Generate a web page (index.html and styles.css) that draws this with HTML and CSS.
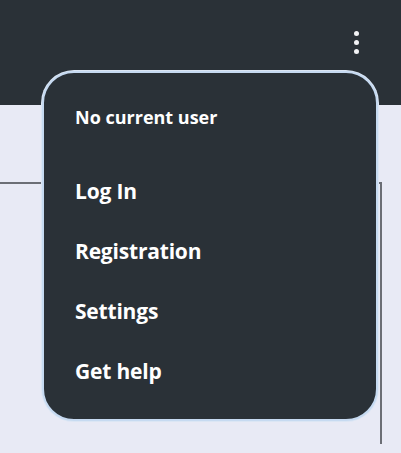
FILE: index.html
```html
<!DOCTYPE html>
<html>
<head>
<meta charset="utf-8">
<link rel="stylesheet" href="styles.css">
</head>
<body>
<header class="topbar">
  <button class="kebab" aria-label="More">
    <span class="dot"></span><span class="dot"></span><span class="dot"></span>
  </button>
</header>
<main class="content">
  <section class="panel"></section>
</main>
<nav class="menu">
  <div class="menu-status">No current user</div>
  <ul class="menu-list">
    <li class="menu-item">Log In</li>
    <li class="menu-item">Registration</li>
    <li class="menu-item">Settings</li>
    <li class="menu-item">Get help</li>
  </ul>
</nav>
</body>
</html>
```
FILE: styles.css
```css
html, body {
  margin: 0;
  padding: 0;
}
body {
  width: 401px;
  height: 453px;
  overflow: hidden;
  background: #e8eaf5;
  font-family: "Open Sans", "Noto Sans", sans-serif;
  position: relative;
}
.topbar {
  height: 105px;
  background: #2a3137;
  display: flex;
  justify-content: flex-end;
  align-items: flex-start;
  padding: 31px 41px 0 0;
  box-sizing: border-box;
}
.kebab {
  background: none;
  border: 0;
  padding: 0;
  width: 6px;
  display: flex;
  flex-direction: column;
  gap: 4px;
  cursor: pointer;
}
.dot {
  width: 5px;
  height: 5px;
  border-radius: 50%;
  background: #f2f3f5;
}
.content {
  padding-top: 77px;
}
.panel {
  margin-left: -10px;
  width: 390px;
  height: 260px;
  border-top: 2px solid #6b6e75;
  border-right: 2px solid #6b6e75;
}
.menu {
  position: absolute;
  left: 42px;
  top: 71px;
  width: 336px;
  height: 350px;
  box-sizing: border-box;
  background: #2a3137;
  border: 2px solid #c6daf1;
  box-shadow: 0 0 0 1px #dbe6f4;
  border-radius: 32px;
  padding: 31px 0 0 31px;
  color: #ffffff;
}
.menu-status {
  font-size: 18px;
  font-weight: 700;
  line-height: 26px;
}
.menu-list {
  list-style: none;
  margin: 45px 0 0;
  padding: 0;
}
.menu-item {
  font-size: 21px;
  font-weight: 700;
  line-height: 32px;
  height: 60px;
  letter-spacing: -0.2px;
}
```
